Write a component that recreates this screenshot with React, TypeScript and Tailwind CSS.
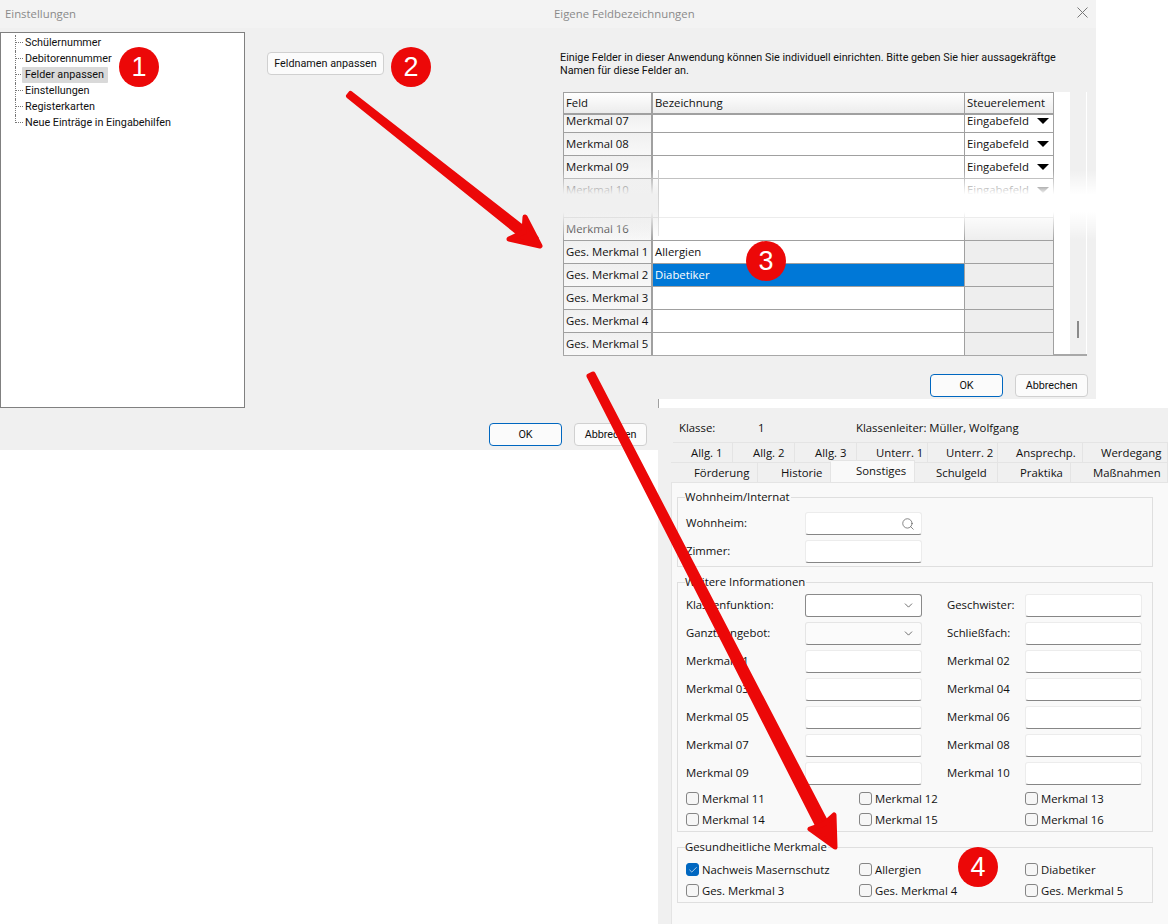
import React from 'react';
import { Check, ChevronDown, Search } from 'lucide-react';

const TREE_ITEMS = ['Schülernummer', 'Debitorennummer', 'Felder anpassen', 'Einstellungen', 'Registerkarten', 'Neue Einträge in Eingabehilfen'];

const TABS_TOP = [
  { label: 'Allg. 1', cls: 'w-[60px] pl-[18px]' },
  { label: 'Allg. 2', cls: 'w-[62px] pl-[20px]' },
  { label: 'Allg. 3', cls: 'w-[62px] pl-[20px]' },
  { label: 'Unterr. 1', cls: 'w-[71px] pl-[19px]' },
  { label: 'Unterr. 2', cls: 'w-[70px] pl-[18px]' },
  { label: 'Ansprechp.', cls: 'w-[85px] pl-[18px]' },
  { label: 'Werdegang', cls: 'w-[85px] pl-[18px]' },
];

const TABS_BOTTOM = [
  { label: 'Förderung', cls: 'w-[87px] pl-[23px]' },
  { label: 'Historie', cls: 'w-[73px] pl-[23px]' },
  { label: 'Sonstiges', cls: 'w-[84px] pl-[25px]', active: true },
  { label: 'Schulgeld', cls: 'w-[83px] pl-[21px]' },
  { label: 'Praktika', cls: 'w-[73px] pl-[22px]' },
  { label: 'Maßnahmen', cls: 'w-[97px] pl-[22px]' },
];

const FIELD_ROWS = [
  ['Merkmal 01', 'Merkmal 02'],
  ['Merkmal 03', 'Merkmal 04'],
  ['Merkmal 05', 'Merkmal 06'],
  ['Merkmal 07', 'Merkmal 08'],
  ['Merkmal 09', 'Merkmal 10'],
];

const DialogButton = ({ label, primary }: { label: string; primary?: boolean }) => (
  <div className={`w-[73px] h-[23px] flex items-center justify-center rounded-[4px] border bg-[#fbfbfb] font-['Roboto',sans-serif] text-[10.8px] ${primary ? 'border-[#0067c0]' : 'border-[#d0d0d0]'}`}>
    {label}
  </div>
);

const Badge = ({ n, cls }: { n: number; cls: string }) => (
  <div className={`absolute w-10 h-10 rounded-full bg-[#ec0808] text-white flex items-center justify-center font-['Liberation_Sans',sans-serif] text-[27px] ${cls}`}>
    {n}
  </div>
);

const Row = ({ name, text, control, cls = 'h-[23px]', selected, inner = 'items-center' }: { name?: string; text?: string; control?: boolean; cls?: string; selected?: boolean; inner?: string }) => (
  <div className={`flex border-b border-[#a0a0a0] overflow-hidden ${cls}`}>
    <div className={`w-[89px] flex ${inner} pl-[2px] bg-linear-to-b from-[#f0f0f0] to-[#f8f8f8] border-r-2 border-[#a0a0a0] whitespace-nowrap`}>{name}</div>
    <div className={`w-[311px] flex items-center pl-[2px] ${selected ? 'bg-[#0078d7] text-white' : 'bg-white'}`}>{text}</div>
    <div className={`flex-1 flex ${inner} pl-[2px] pr-[4px] border-l border-[#a0a0a0] ${control === undefined ? 'bg-[#eeeeee]' : 'bg-white'}`}>
      {control && (
        <div className="w-full h-4 flex items-center justify-between">
          <span>Eingabefeld</span>
          <span className="w-0 h-0 border-x-[6px] border-x-transparent border-t-[6px] border-t-black" />
        </div>
      )}
    </div>
  </div>
);

const TreeItem = ({ label, selected, last }: { label: string; selected: boolean; last: boolean }) => (
  <div className="flex h-4 items-stretch">
    <div className={`w-2 border-l border-dotted border-[#777] ${last ? 'h-2' : ''}`}>
      <div className="h-2 border-b border-dotted border-[#777]" />
    </div>
    <div className={`flex items-center pl-[3px] pr-[4px] -ml-px whitespace-nowrap rounded-[1px] ${selected ? 'bg-[#d9d9d9]' : ''}`}>{label}</div>
  </div>
);

const Input = ({ icon, strong, dim }: { icon?: 'search' | 'chevron'; strong?: boolean; dim?: boolean }) => (
  <div className={`w-[117px] h-[23px] flex items-center justify-end pr-[6px] rounded-[3px] border border-b-[#868686] ${strong ? 'border-[#8a8a8a] bg-white' : dim ? 'border-[#e5e5e5] bg-[#fbfbfb]' : 'border-[#ececec] bg-white'}`}>
    {icon === 'search' && <Search size={14} strokeWidth={1.2} className="text-[#555]" />}
    {icon === 'chevron' && <ChevronDown size={13} strokeWidth={1.4} className="text-[#444]" />}
  </div>
);

const CheckItem = ({ label, checked }: { label: string; checked?: boolean }) => (
  <div className="flex items-center gap-[3px] h-[21px] whitespace-nowrap">
    <span className={`w-[13px] h-[13px] flex items-center justify-center rounded-[3px] border ${checked ? 'bg-[#0067c0] border-[#0067c0]' : 'bg-[#f6f6f6] border-[#858585]'}`}>
      {checked && <Check size={10} strokeWidth={1.6} className="text-white" />}
    </span>
    <span>{label}</span>
  </div>
);

const Group = ({ title, cls, children }: { title: string; cls: string; children: React.ReactNode }) => (
  <div className={`relative ml-[5px] w-[476px] border border-[#dfdfdf] pl-[8px] ${cls}`}>
    <span className="absolute -top-[9px] left-[7px] bg-[#f9f9f9] pr-px leading-[16px]">{title}</span>
    {children}
  </div>
);

const FieldRow = ({ left, right, leftInput }: { left: string; right?: string; leftInput?: React.ReactNode }) => (
  <div className="flex items-center h-[23px]">
    <span className="w-[119px] -mt-[2px]">{left}</span>
    {leftInput ?? <Input />}
    {right && <span className="w-[78px] ml-[25px] -mt-[2px]">{right}</span>}
    {right && <Input />}
  </div>
);

const CheckRow = ({ items }: { items: { label: string; checked?: boolean }[] }) => (
  <div className="grid grid-cols-[173px_166px_1fr]">
    {items.map((it) => <CheckItem key={it.label} {...it} />)}
  </div>
);

export default function App() {
  return (
    <div className="relative w-[1168px] h-[924px] overflow-hidden bg-white text-[#111] font-['Open_Sans',sans-serif] text-[11.35px] leading-4">
      {/* Einstellungen window */}
      <div className="absolute left-0 top-0 w-[660px] h-[450px] bg-[#f0f0f0]">
        <div className="h-7 bg-[#f3f3f3] flex items-center pl-[5px] text-[#8a8a8a]">Einstellungen</div>
        <div className="flex mt-1">
          <div className="w-[245px] h-[376px] bg-white border border-[#808080] pl-[14px] pt-[2px] font-['Roboto',sans-serif] text-[10.8px]">
            {TREE_ITEMS.map((t, i) => (
              <TreeItem key={t} label={t} selected={i === 2} last={i === TREE_ITEMS.length - 1} />
            ))}
          </div>
          <div className="ml-[22px] mt-5 w-[117px] h-[23px] flex items-center justify-center rounded-[4px] border border-[#d0d0d0] bg-[#fbfbfb] font-['Roboto',sans-serif] text-[10.8px]">Feldnamen anpassen</div>
        </div>
        <div className="flex justify-end gap-3 pr-[13px] mt-[15px]">
          <DialogButton label="OK" primary />
          <DialogButton label="Abbrechen" />
        </div>
      </div>

      {/* Eigene Feldbezeichnungen window */}
      <div className="absolute left-[540px] top-0 w-[556px] h-[399px] bg-[#f0f0f0]">
        <div className="h-7 bg-[#f3f3f3] flex items-center justify-between pl-[14px] pr-[8px] text-[#8a8a8a]">
          <span>Eigene Feldbezeichnungen</span>
          <svg width="11" height="11" viewBox="0 0 11 11" stroke="#777" strokeWidth="1" className="-mt-1"><path d="M0.5 0.5L10.5 10.5M10.5 0.5L0.5 10.5" /></svg>
        </div>
        <div className="pl-5">
          <p className="mt-[23px] w-[510px] leading-[13px] font-['Roboto',sans-serif] text-[10.8px]">Einige Felder in dieser Anwendung können Sie individuell einrichten. Bitte geben Sie hier aussagekräftge Namen für diese Felder an.</p>
          <div className="mt-[15px] ml-[3px] w-[524px] h-[264px] flex border-b-2 border-[#a8a8a8] bg-white">
            <div className="w-[491px] border-x border-t border-[#a0a0a0]">
              <div className="flex h-[22px] border-b-2 border-[#a0a0a0] bg-linear-to-b from-[#ffffff] to-[#ececec]">
                <div className="w-[89px] pl-[2px] flex items-center border-r-2 border-[#a0a0a0]">Feld</div>
                <div className="w-[311px] pl-[2px] flex items-center">Bezeichnung</div>
                <div className="flex-1 pl-[2px] flex items-center border-l border-[#a0a0a0]">Steuerelement</div>
              </div>
              <Row name="Merkmal 07" control cls="h-[18px]" inner="items-end pb-[3px]" />
              <Row name="Merkmal 08" control />
              <Row name="Merkmal 09" control />
              <Row name="Merkmal 10" control cls="h-[39px]" inner="items-start pt-[3px]" />
              <Row name="Merkmal 16" />
              <Row name="Ges. Merkmal 1" text="Allergien" />
              <Row name="Ges. Merkmal 2" text="Diabetiker" selected />
              <Row name="Ges. Merkmal 3" />
              <Row name="Ges. Merkmal 4" />
              <Row name="Ges. Merkmal 5" cls="h-[22px] !border-b-0" />
            </div>
            <div className="w-[16px]" />
            <div className="w-[16px] bg-[#f0f0f0] flex flex-col justify-end items-center pb-[16px]">
              <div className="w-[2px] h-[17px] bg-[#8a8a8a]" />
            </div>
          </div>
          <div className="flex justify-end gap-3 pr-[8px] mt-[18px]">
            <DialogButton label="OK" primary />
            <DialogButton label="Abbrechen" />
          </div>
        </div>
      </div>

      {/* torn edge over the table */}
      <div className="absolute left-[547px] top-[170px] w-[111px] h-[70px] bg-[linear-gradient(to_bottom,rgba(240,240,240,0)_0%,#f0f0f0_35%,#f0f0f0_60%,rgba(240,240,240,0)_100%)]" />
      <div className="absolute left-[658px] top-[170px] w-[438px] h-[70px] bg-[linear-gradient(to_bottom,rgba(255,255,255,0)_0%,#fff_35%,#fff_60%,rgba(255,255,255,0)_100%)]">
        <div className="w-px h-[66px] bg-linear-to-b from-[#c8c8c8] to-[#e4e4e4]" />
      </div>

      {/* Sonstiges window */}
      <div className="absolute left-[658px] top-[399px] w-[510px] h-[525px]">
        <div className="h-[9px] bg-white border-l border-[#a0a0a0]" />
        <div className="h-[516px] bg-[#f0f0f0]">
          <div className="h-[34px] pt-3 flex">
            <span className="ml-[21px] w-[79px]">Klasse:</span>
            <span className="w-[98px]">1</span>
            <span>Klassenleiter: Müller, Wolfgang</span>
          </div>
          <div className="flex h-5 pl-[15px]">
            {TABS_TOP.map((t) => (
              <div key={t.label} className={`${t.cls} flex items-center border-t border-r border-[#e4e4e4] whitespace-nowrap`}>{t.label}</div>
            ))}
          </div>
          <div className="flex h-5 pl-[13px]">
            {TABS_BOTTOM.map((t) => (
              <div key={t.label} className={`${t.cls} flex items-center whitespace-nowrap border-r border-t border-[#e4e4e4] ${t.active ? 'bg-[#f9f9f9] h-[22px] -mt-[2px] pb-[2px] relative' : ''}`}>{t.label}</div>
            ))}
          </div>
          <div className="ml-[13px] h-[442px] bg-[#f9f9f9] border-l border-t border-[#e4e4e4] pt-[14px]">
            <Group title="Wohnheim/Internat" cls="h-[70px] pt-[14px]">
              <div className="flex flex-col gap-[5px]">
                <FieldRow left="Wohnheim:" leftInput={<Input icon="search" />} />
                <FieldRow left="Zimmer:" />
              </div>
            </Group>
            <Group title="Weitere Informationen" cls="h-[250px] mt-[15px] pt-[11px]">
              <div className="flex flex-col gap-[5px]">
                <FieldRow left="Klassenfunktion:" right="Geschwister:" leftInput={<Input icon="chevron" strong />} />
                <FieldRow left="Ganzt. Angebot:" right="Schließfach:" leftInput={<Input icon="chevron" dim />} />
                {FIELD_ROWS.map(([l, r]) => <FieldRow key={l} left={l} right={r} />)}
              </div>
              <div className="mt-[3px]">
                <CheckRow items={[{ label: 'Merkmal 11' }, { label: 'Merkmal 12' }, { label: 'Merkmal 13' }]} />
                <CheckRow items={[{ label: 'Merkmal 14' }, { label: 'Merkmal 15' }, { label: 'Merkmal 16' }]} />
              </div>
            </Group>
            <Group title="Gesundheitliche Merkmale" cls="h-[56px] mt-[15px] pt-[11px]">
              <CheckRow items={[{ label: 'Nachweis Masernschutz', checked: true }, { label: 'Allergien' }, { label: 'Diabetiker' }]} />
              <CheckRow items={[{ label: 'Ges. Merkmal 3' }, { label: 'Ges. Merkmal 4' }, { label: 'Ges. Merkmal 5' }]} />
            </Group>
          </div>
        </div>
      </div>

      {/* red annotation arrows */}
      <svg className="absolute left-0 top-0 pointer-events-none" width="1168" height="924" viewBox="0 0 1168 924">
        <g fill="#ec0808" stroke="#ec0808" strokeLinejoin="round" strokeLinecap="round">
          <path d="M348.5 96L350.5 93.5L536 238L531 243Z" strokeWidth="5" />
          <path d="M525 217L540 246L509 239L524 232Z" strokeWidth="5" />
          <path d="M589 376L593 374L831 832L823 836Z" strokeWidth="5" />
          <path d="M834 815L835 847L810 829L824 824Z" strokeWidth="5" />
        </g>
      </svg>

      <Badge n={1} cls="left-[119px] top-[47px]" />
      <Badge n={2} cls="left-[391px] top-[47px]" />
      <Badge n={3} cls="left-[746px] top-[241px]" />
      <Badge n={4} cls="left-[958px] top-[847px]" />
    </div>
  );
}
